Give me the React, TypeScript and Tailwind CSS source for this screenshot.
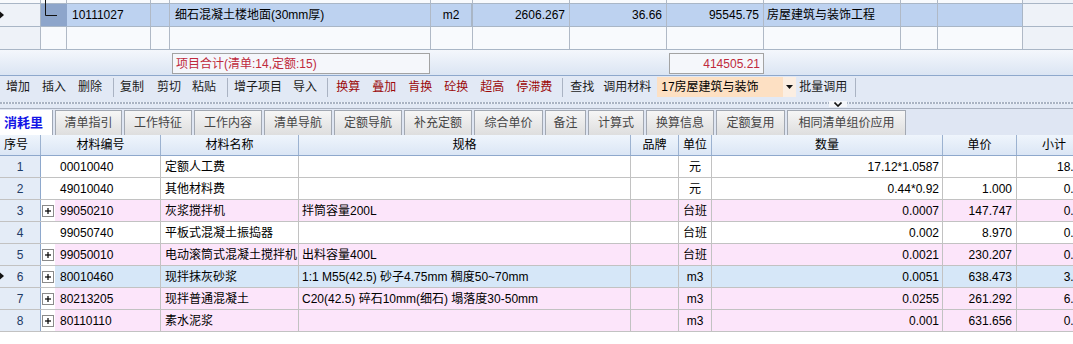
type Item = {
  no: number;
  code: string;
  name: string;
  spec?: string;
  unit: string;
  qty: string;
  price?: string;
  sub: string;
  plus?: boolean;
  pink?: boolean;
  sel?: boolean;
};

const items: Item[] = [
  { no: 1, code: '00010040', name: '定额人工费', unit: '元', qty: '17.12*1.0587', sub: '18.13' },
  { no: 2, code: '49010040', name: '其他材料费', unit: '元', qty: '0.44*0.92', price: '1.000', sub: '0.40' },
  { no: 3, code: '99050210', name: '灰浆搅拌机', spec: '拌筒容量200L', unit: '台班', qty: '0.0007', price: '147.747', sub: '0.10', plus: true, pink: true },
  { no: 4, code: '99050740', name: '平板式混凝土振捣器', unit: '台班', qty: '0.002', price: '8.970', sub: '0.02' },
  { no: 5, code: '99050010', name: '电动滚筒式混凝土搅拌机', spec: '出料容量400L', unit: '台班', qty: '0.0021', price: '230.207', sub: '0.48', plus: true, pink: true },
  { no: 6, code: '80010460', name: '现拌抹灰砂浆', spec: '1:1 M55(42.5) 砂子4.75mm 稠度50~70mm', unit: 'm3', qty: '0.0051', price: '638.473', sub: '3.26', plus: true, sel: true },
  { no: 7, code: '80213205', name: '现拌普通混凝土', spec: 'C20(42.5) 碎石10mm(细石) 塌落度30-50mm', unit: 'm3', qty: '0.0255', price: '261.292', sub: '6.66', plus: true, pink: true },
  { no: 8, code: '80110110', name: '素水泥浆', unit: 'm3', qty: '0.001', price: '631.656', sub: '0.63', plus: true, pink: true },
];

const tabs = [
  { label: '清单指引', w: 'w-[67px]' },
  { label: '工作特征', w: 'w-[68px]' },
  { label: '工作内容', w: 'w-[68px]' },
  { label: '清单导航', w: 'w-[68px]' },
  { label: '定额导航', w: 'w-[68px]' },
  { label: '补充定额', w: 'w-[68px]' },
  { label: '综合单价', w: 'w-[69px]' },
  { label: '备注', w: 'w-[41px]' },
  { label: '计算式', w: 'w-[56px]' },
  { label: '换算信息', w: 'w-[68px]' },
  { label: '定额复用', w: 'w-[69px]' },
  { label: '相同清单组价应用', w: 'w-[119px]' },
];

function Marker({ className }: { className?: string }) {
  return (
    <svg className={className} width="5" height="8" viewBox="0 0 5 8">
      <polygon points="0,0.5 4,4 0,7.5" fill="#111" />
    </svg>
  );
}

function PlusBox() {
  return (
    <svg width="12" height="12" viewBox="0 0 12 12">
      <rect x="0.5" y="0.5" width="11" height="11" fill="#fff" stroke="#8a8a8a" />
      <line x1="3" y1="6" x2="9" y2="6" stroke="#000" strokeWidth="1.2" />
      <line x1="6" y1="3" x2="6" y2="9" stroke="#000" strokeWidth="1.2" />
    </svg>
  );
}

function Sep({ className }: { className: string }) {
  return <div className={`h-[19px] w-px bg-[#aab3c3] ${className}`} />;
}

function DataRow({ r }: { r: Item }) {
  const bg = r.sel ? 'bg-[#d6e7f8]' : r.pink ? 'bg-[#fce5fa]' : 'bg-white';
  return (
    <div className="flex h-[22px] border-b border-[#c2c2c2]">
      <div className="relative flex w-[41px] shrink-0 items-center justify-center border-r border-[#8ea8cc] bg-[#e4ecf7] text-[#1d3a66]">
        {r.sel && <Marker className="absolute left-0 top-[6px]" />}
        {r.no}
      </div>
      <div className="flex w-[120px] shrink-0 border-r border-[#c2c2c2]">
        <div className="flex w-[14px] items-center bg-white pl-[1px]">{r.plus && <PlusBox />}</div>
        <div className={`flex flex-1 items-center pl-[5px] ${bg}`}>{r.code}</div>
      </div>
      <div className={`flex w-[138px] shrink-0 items-center overflow-hidden whitespace-nowrap border-r border-[#c2c2c2] pl-[4px] ${bg}`}>{r.name}</div>
      <div className={`flex w-[332px] shrink-0 items-center whitespace-nowrap border-r border-[#c2c2c2] pl-[3px] ${bg}`}>{r.spec}</div>
      <div className={`w-[48px] shrink-0 border-r border-[#c2c2c2] ${bg}`} />
      <div className={`flex w-[33px] shrink-0 items-center justify-center border-r border-[#c2c2c2] ${bg}`}>{r.unit}</div>
      <div className={`flex w-[231px] shrink-0 items-center justify-end border-r border-[#c2c2c2] pr-[3px] ${bg}`}>{r.qty}</div>
      <div className={`flex w-[74px] shrink-0 items-center justify-end border-r border-[#c2c2c2] pr-[4px] ${bg}`}>{r.price}</div>
      <div className={`flex w-[74px] shrink-0 items-center justify-end pr-[4px] ${bg}`}>{r.sub}</div>
    </div>
  );
}

const topCols = ['w-[41px]', 'w-[26px]', 'w-[84px]', 'w-[19px]', 'w-[261px]', 'w-[42px]', 'w-[97px]', 'w-[97px]', 'w-[97px]', 'w-[137px]', 'w-[37px]', 'w-[85px]'];

export default function App() {
  return (
    <div className="relative h-[344px] w-[1073px] overflow-hidden bg-white font-['Liberation_Sans','Noto_Sans_CJK_SC',sans-serif] text-[12px] leading-none text-black">
      {/* upper grid */}
      <div className="relative bg-[#eef2f8]">
        <div className="flex h-[4px] border-b border-[#a9b6c6]">
          {topCols.map((w, i) => (
            <div key={i} className={`${w} shrink-0 border-r border-[#b0b9c6] bg-[#f8fafd]`} />
          ))}
        </div>
        <div className="flex h-[23px] border-b border-[#a9b6c6]">
          <div className="relative w-[41px] shrink-0 border-r border-[#a9b6c6] bg-[#eef2f8]">
            <Marker className="absolute left-0 top-[7px]" />
          </div>
          <div className="w-[26px] shrink-0 bg-[#8da5cb]" />
          <div className="flex w-[84px] shrink-0 items-center border-r border-[#b0b9c6] bg-[#bdd2f0] pl-[5px]">10111027</div>
          <div className="w-[19px] shrink-0 border-r border-[#b0b9c6] bg-[#bdd2f0]" />
          <div className="flex w-[261px] shrink-0 items-center border-r border-[#b0b9c6] bg-[#bdd2f0] pl-[5px]">细石混凝土楼地面(30mm厚)</div>
          <div className="flex w-[42px] shrink-0 items-center justify-center border-r-2 border-[#a9b6c6] bg-[#bdd2f0]">m2</div>
          <div className="flex w-[97px] shrink-0 items-center justify-end border-r border-[#b0b9c6] bg-[#bdd2f0] pr-[4px]">2606.267</div>
          <div className="flex w-[97px] shrink-0 items-center justify-end border-r border-[#b0b9c6] bg-[#bdd2f0] pr-[4px]">36.66</div>
          <div className="flex w-[97px] shrink-0 items-center justify-end border-r border-[#b0b9c6] bg-[#bdd2f0] pr-[4px]">95545.75</div>
          <div className="flex w-[137px] shrink-0 items-center border-r border-[#b0b9c6] bg-[#bdd2f0] pl-[3px]">房屋建筑与装饰工程</div>
          <div className="w-[37px] shrink-0 border-r border-[#b0b9c6] bg-[#bdd2f0]" />
          <div className="w-[85px] shrink-0 border-r border-[#a9b6c6] bg-[#bdd2f0]" />
        </div>
        <div className="flex h-[23px] border-b border-[#a9b6c6]">
          {topCols.map((w, i) => (
            <div key={i} className={`${w} shrink-0 border-r border-[#b0b9c6] ${i === 0 ? 'bg-[#eef2f8]' : 'bg-[#f8fafd]'}`} />
          ))}
        </div>
        <svg className="absolute left-[44px] top-0" width="14" height="17" viewBox="0 0 14 17">
          <path d="M1.5 0 V15.5 H13" fill="none" stroke="#111" strokeWidth="1" />
        </svg>
      </div>

      {/* summary strip */}
      <div className="flex h-[26px] border-b border-[#8ea8cc] bg-gradient-to-b from-[#f4f7fc] to-[#dbe5f3]">
        <div className="ml-[172px] mt-[3px] flex h-[21px] w-[258px] items-center border border-[#a3a3a3] bg-[#f5f7fb] pl-[3px] text-[#bf2a3c]">
          项目合计(清单:14,定额:15)
        </div>
        <div className="ml-[239px] mt-[3px] flex h-[21px] w-[95px] items-center justify-end border border-[#a3a3a3] bg-[#f5f7fb] pr-[3px] text-[#bf2a3c]">
          414505.21
        </div>
      </div>

      {/* toolbar */}
      <div className="flex h-[22px] items-center bg-[#e2e9f5] text-[#1a1a1a]">
        <span className="ml-[6px]">增加</span>
        <span className="ml-[12px]">插入</span>
        <span className="ml-[12px]">删除</span>
        <Sep className="ml-[11px]" />
        <span className="ml-[6px]">复制</span>
        <span className="ml-[13px]">剪切</span>
        <span className="ml-[11px]">粘贴</span>
        <Sep className="ml-[11px]" />
        <span className="ml-[6px]">增子项目</span>
        <span className="ml-[11px]">导入</span>
        <Sep className="ml-[10px]" />
        <span className="ml-[8px] text-[#9c0a0a]">换算</span>
        <span className="ml-[12px] text-[#9c0a0a]">叠加</span>
        <span className="ml-[12px] text-[#9c0a0a]">肯换</span>
        <span className="ml-[12px] text-[#9c0a0a]">砼换</span>
        <span className="ml-[12px] text-[#9c0a0a]">超高</span>
        <span className="ml-[12px] text-[#9c0a0a]">停滞费</span>
        <Sep className="ml-[10px]" />
        <span className="ml-[7px]">查找</span>
        <span className="ml-[9px]">调用材料</span>
        <div className="ml-[6px] flex h-[20px] w-[139px] items-center bg-[#fde0c3]">
          <span className="flex-1 pl-[4px] text-black">17房屋建筑与装饰</span>
          <div className="flex h-full w-[13px] items-center justify-center bg-[#fbeee2]">
            <svg width="7" height="4" viewBox="0 0 7 4">
              <polygon points="0,0 7,0 3.5,4" fill="#111" />
            </svg>
          </div>
        </div>
        <span className="ml-[3px]">批量调用</span>
        <Sep className="ml-[8px]" />
      </div>

      {/* splitter */}
      <div className="relative h-[10px] bg-[#e2e9f5]">
        <div className="absolute left-0 right-0 top-[4px] h-[2px] bg-[repeating-linear-gradient(90deg,#a9b3c3_0_2px,#eef2f8_2px_3px)]" />
        <div className="absolute left-[829px] top-[3px] flex h-[6px] w-[18px] items-center justify-center bg-[#f4f6fa]">
          <svg width="8" height="5" viewBox="0 0 8 5">
            <path d="M0.5 0.5 L4 4 L7.5 0.5" fill="none" stroke="#111" strokeWidth="1.6" />
          </svg>
        </div>
      </div>

      {/* tabs */}
      <div className="flex h-[27px] items-end border-t border-[#a9b1c0] bg-[#dfe6f3]">
        <div className="flex h-[25px] w-[53px] items-center border-r border-[#9ea6b4] bg-white pl-[4px] text-[13px] font-bold text-[#1414e6]">
          消耗里
        </div>
        {tabs.map((t) => (
          <div
            key={t.label}
            className={`ml-[2px] flex h-[25px] ${t.w} items-center justify-center border border-b-0 border-[#a2a8b2] bg-gradient-to-b from-[#f6f6f6] to-[#dedede] text-[#454545]`}
          >
            {t.label}
          </div>
        ))}
      </div>

      {/* header */}
      <div className="flex h-[21px] border-b border-[#8ea8cc] bg-gradient-to-b from-[#eff5fc] to-[#dbe6f5]">
        <div className="flex w-[41px] shrink-0 items-center border-r border-[#9cb2d0] pl-[4px]">序号</div>
        <div className="flex w-[120px] shrink-0 items-center justify-center border-r border-[#9cb2d0]">材料编号</div>
        <div className="flex w-[138px] shrink-0 items-center justify-center border-r border-[#9cb2d0]">材料名称</div>
        <div className="flex w-[332px] shrink-0 items-center justify-center border-r border-[#9cb2d0]">规格</div>
        <div className="flex w-[48px] shrink-0 items-center justify-center border-r border-[#9cb2d0]">品牌</div>
        <div className="flex w-[33px] shrink-0 items-center justify-center border-r border-[#9cb2d0]">单位</div>
        <div className="flex w-[231px] shrink-0 items-center justify-center border-r border-[#9cb2d0]">数量</div>
        <div className="flex w-[74px] shrink-0 items-center justify-center border-r border-[#9cb2d0]">单价</div>
        <div className="flex w-[74px] shrink-0 items-center justify-center">小计</div>
      </div>

      {/* rows */}
      <div>
        {items.map((r) => (
          <DataRow key={r.no} r={r} />
        ))}
      </div>
    </div>
  );
}
